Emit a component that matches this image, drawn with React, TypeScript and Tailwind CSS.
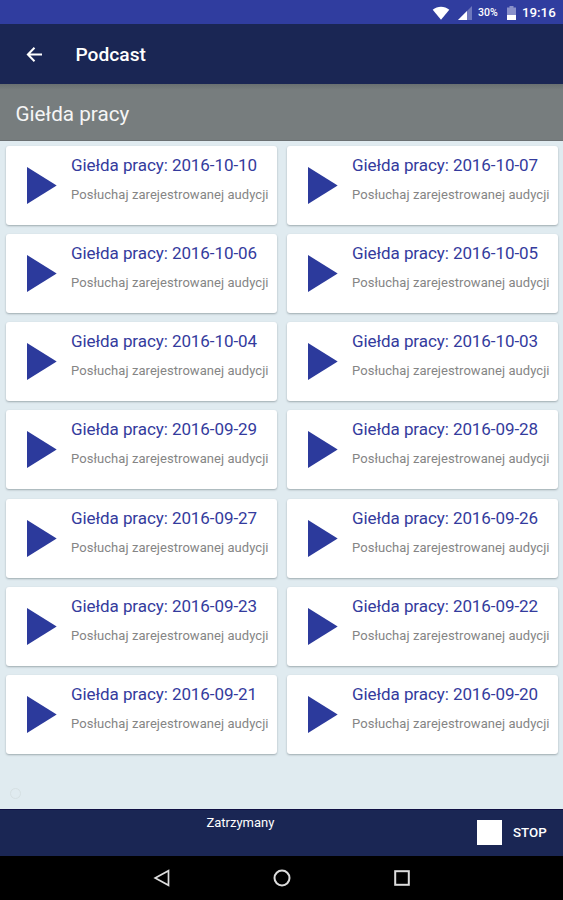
const dates = [
  '2016-10-10', '2016-10-07', '2016-10-06', '2016-10-05', '2016-10-04', '2016-10-03', '2016-09-29',
  '2016-09-28', '2016-09-27', '2016-09-26', '2016-09-23', '2016-09-22', '2016-09-21', '2016-09-20',
];

function StatusBar() {
  return (
    <div className="flex h-6 shrink-0 items-center justify-end bg-[#303d9f] pr-[7px] pt-px text-white">
      <svg className="h-[14px] w-[18px]" viewBox="0 0 18 14" fill="#fff">
        <path d="M0.7 3.8C5.5 -0.2 12.5 -0.2 17.3 3.8L9 13.8Z" />
      </svg>
      <svg className="ml-[8px] h-[14px] w-[14px]" viewBox="0 0 14 14">
        <path d="M0 14L14 0V14Z" fill="#6e77bc" />
        <path d="M0 14L9 5V14Z" fill="#fff" />
      </svg>
      <span className="ml-[6px] w-[21px] whitespace-nowrap text-[10.5px] font-medium">30%</span>
      <svg className="ml-[8px] h-[14px] w-[9px]" viewBox="0 0 9 14">
        <path d="M0 1.5H2.5V0H6.5V1.5H9V9H0Z" fill="#8990c9" />
        <path d="M0 9H9V14H0Z" fill="#fff" />
      </svg>
      <span className="ml-[6px] w-[34px] whitespace-nowrap text-[13.3px] font-medium">19:16</span>
    </div>
  );
}

function PodcastCard({ date }: { date: string }) {
  return (
    <div className="flex h-[79px] rounded-[3px] bg-white pl-[21px] shadow-[0_1px_2px_rgba(60,75,80,0.4)]">
      <svg className="mt-[20px] h-[39px] w-[31px] shrink-0" viewBox="0 0 31 39">
        <path d="M0 1L29.7 19.5L0 38Z" fill="#2c3a9c" />
      </svg>
      <div className="ml-[13.5px] whitespace-nowrap">
        <div className="mt-[9px] text-[17px] leading-5 tracking-[-0.07px] text-[#343b9d]">Giełda pracy: {date}</div>
        <div className="mt-[12px] text-[13px] leading-4 tracking-[0.06px] text-[#858585]">Posłuchaj zarejestrowanej audycji</div>
      </div>
    </div>
  );
}

export default function App() {
  return (
    <div className="flex h-[900px] w-[563px] flex-col overflow-hidden bg-[#e0ebf0] font-['Roboto',sans-serif]">
      <StatusBar />
      <header className="flex h-[60px] shrink-0 items-center bg-[#1a2654] pl-[26px] pt-[2px] text-white">
        <svg className="mb-[2px] h-[17px] w-[17px]" viewBox="0 0 17 17" fill="none" stroke="#fff" strokeWidth="2">
          <path d="M16 8.5H2.5M8.5 1.8L1.9 8.5L8.5 15.2" />
        </svg>
        <h1 className="ml-[32.5px] pt-px text-[19.2px] font-medium">Podcast</h1>
      </header>
      <div className="flex h-[57px] shrink-0 items-center border-b border-[#6b7072] bg-[linear-gradient(#697071,#777d7e_6px)] pl-[15.5px] pt-[5px] text-[20.7px] text-[#f5f5f5]">
        Giełda pracy
      </div>
      <main className="flex min-h-0 flex-1 flex-col px-[5.5px] pt-[5px]">
        <div className="grid grid-cols-[271.5px_271.5px] gap-x-[9.5px] gap-y-[9.15px]">
          {dates.map((date) => (
            <PodcastCard key={date} date={date} />
          ))}
        </div>
        <div className="ml-[4px] mt-[34px] h-[11px] w-[11px] rounded-full border border-[#d6e0e3]" />
      </main>
      <footer className="flex h-[47px] shrink-0 border-t border-[#101044] bg-[#1a2654] text-white">
        <div className="w-[477px] pl-[206.5px] pt-[5px] text-[13px] leading-4">Zatrzymany</div>
        <div className="flex items-center">
          <div className="mb-[2px] h-[25px] w-[25px] bg-white" />
          <span className="ml-[11px] text-[13.3px] font-medium">STOP</span>
        </div>
      </footer>
      <nav className="flex h-[44px] shrink-0 items-center bg-black pl-[153px]">
        <svg className="h-[18px] w-[18px]" viewBox="0 0 18 18" fill="none" stroke="#ddd" strokeWidth="1.7">
          <path d="M15.5 1.8V16.2L2.2 9Z" />
        </svg>
        <svg className="ml-[102px] h-[18px] w-[18px]" viewBox="0 0 18 18" fill="none" stroke="#ddd" strokeWidth="2">
          <circle cx="9" cy="9" r="7.5" />
        </svg>
        <svg className="ml-[102px] h-[18px] w-[18px]" viewBox="0 0 18 18" fill="none" stroke="#ddd" strokeWidth="2">
          <rect x="2.2" y="2.2" width="13.6" height="13.6" />
        </svg>
      </nav>
    </div>
  );
}
